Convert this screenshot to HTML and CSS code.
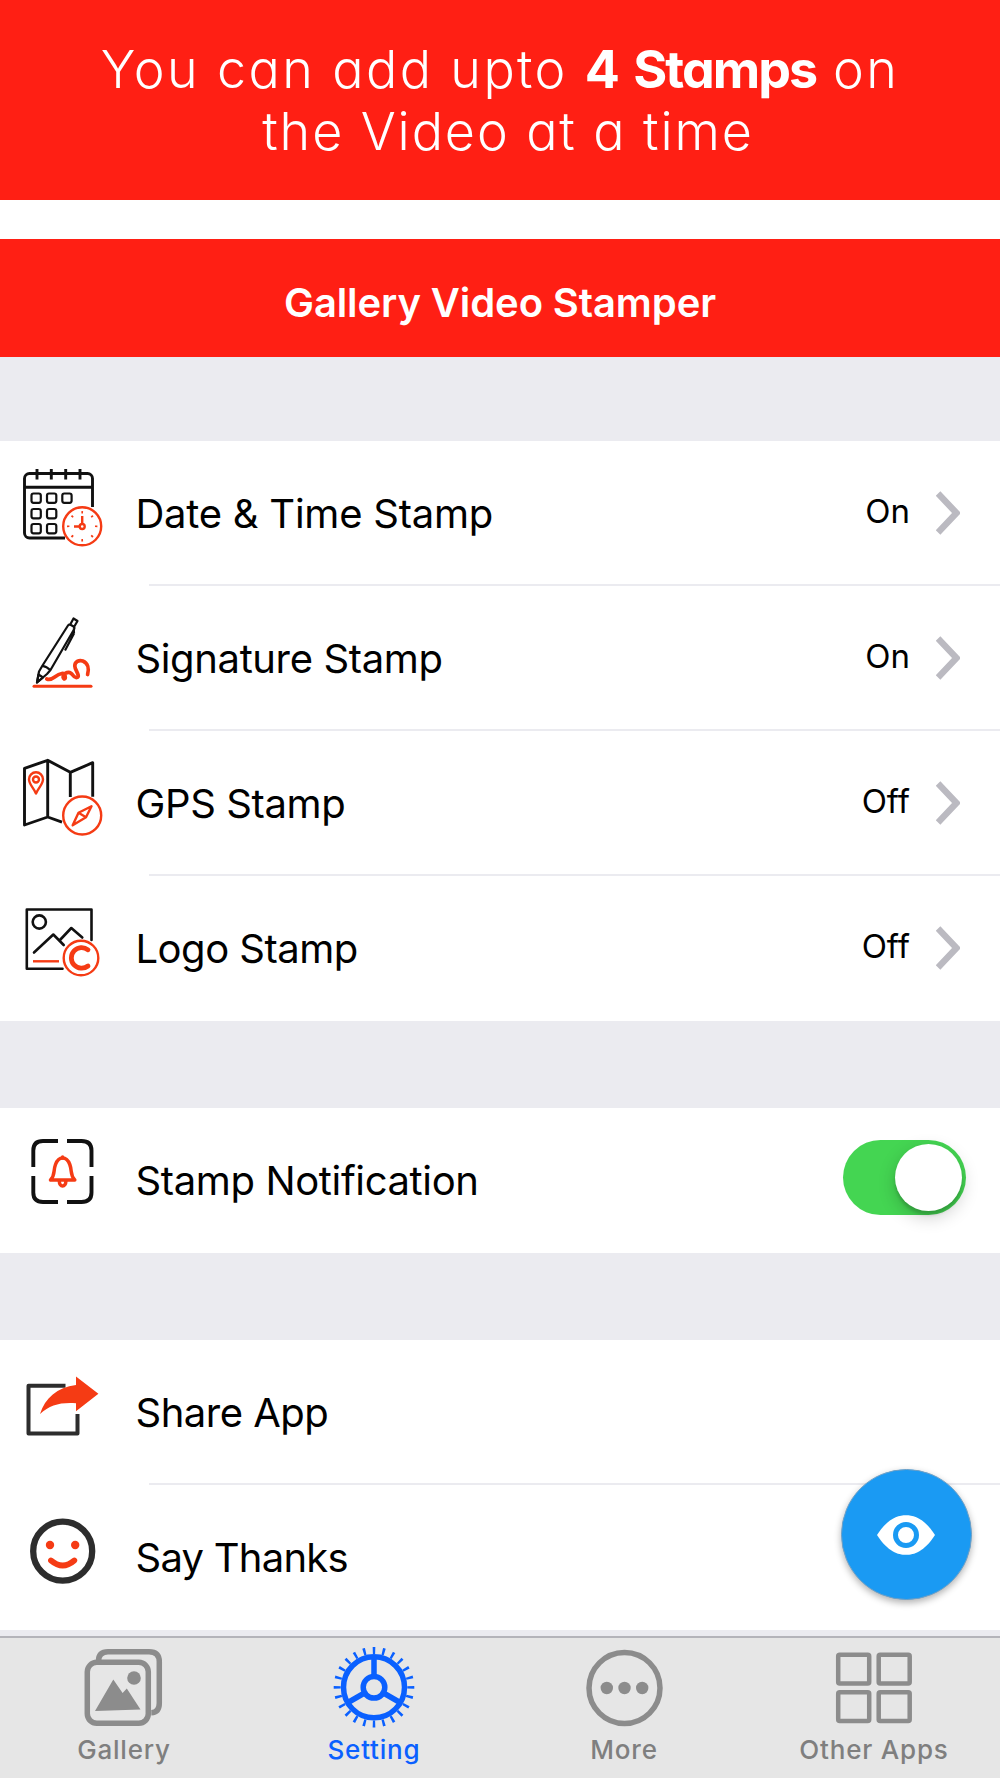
FILE: index.html
```
<!DOCTYPE html>
<html lang="en">
    <head>
        <meta charset="utf-8">
        <title>Gallery Video Stamper</title>
        <link rel="stylesheet" href="styles.css">
    </head>
    <body>
        <div class="promo">
            <div class="promo-line">You can add upto <b>4 Stamps</b> on</div>
            <div class="promo-line second">the Video at a time</div>
        </div>

        <h1 class="navbar">Gallery Video Stamper</h1>

        <main class="settings">
            <section class="group">
                <div class="row">
                    <svg class="icon" viewBox="0 0 110 145" aria-hidden="true">
                        <g class="ink">
                            <path d="M92.5 66V37.5a5 5 0 0 0-5-5h-58a5 5 0 0 0-5 5V92a5 5 0 0 0 5 5H65" />
                            <path d="M24.5 46.3h68M37 28v10.500M51.300 28v10.500M65.700 28v10.500M80 28v10.500" />
                        </g>
                        <g class="ink thin">
                            <rect x="31.500" y="52.500" width="9.300" height="9.300" rx="2" />
                            <rect x="47" y="52.500" width="9.300" height="9.300" rx="2" />
                            <rect x="62.300" y="52.500" width="9.300" height="9.300" rx="2" />
                            <rect x="31.500" y="68" width="9.300" height="9.300" rx="2" />
                            <rect x="47" y="68" width="9.300" height="9.300" rx="2" />
                            <rect x="31.500" y="83" width="9.300" height="9.300" rx="2" />
                            <rect x="47" y="83" width="9.300" height="9.300" rx="2" />
                        </g>
                        <g class="red">
                            <circle cx="82.200" cy="85.300" r="19" />
                            <circle cx="82.200" cy="85.500" r="2.500" />
                            <path d="M82.200 83V75M79.500 85.500H74" />
                            <circle cx="82.200" cy="85.300" r="14" pathLength="80" stroke-dasharray="1.600 8.400" stroke-dashoffset=".8" />
                        </g>
                    </svg>
                    <span class="label date">Date &amp; Time Stamp</span>
                    <span class="value">On</span>
                    <svg class="chevron" viewBox="0 0 24 46"><path d="M2 3.500l18.500 19.500L2 42.500" /></svg>
                </div>
                <div class="row">
                    <svg class="icon" viewBox="0 0 110 145" aria-hidden="true">
                        <g class="ink thin">
                            <path d="M37 96.500l2-11 3.500-6L68 39.500q1-1.500 3-.5l2.500 1.500q1.500 1 .500 3L50.500 84l-3.500 4zM42.500 79.800q4 .500 8 4.500M70.500 38l3-5.500 4 2.500-3.500 6M74 47.500L65 64.500M73.800 42.500l.200 5" />
                            <path d="M37 96.500l1.500-8 4.500 3z" />
                        </g>
                        <g class="red">
                            <path class="scribble" d="M46.800 93c6 2.500 8-4.500 15-5.500 4-.5 4 5 2.500 5.500-3-1.500 0-6.500 4.200-6.700 4.500-.3 4 6 8.300 5.200 4.200-1-2-7.500-2-11.500 0-4 4-6.500 8-5 5 2 6.500 7.500 4.800 13.500" />
                            <path class="base" d="M34 100.300h57" />
                        </g>
                    </svg>
                    <span class="label signature">Signature Stamp</span>
                    <span class="value">On</span>
                    <svg class="chevron" viewBox="0 0 24 46"><path d="M2 3.500l18.500 19.500L2 42.500" /></svg>
                </div>
                <div class="row">
                    <svg class="icon" viewBox="0 0 110 145" aria-hidden="true">
                        <path class="ink" d="M62 91.200L47.700 86l-23.200 8V37.300l23.200-8 22.600 12 22.400-9.600v34M47.700 29.300V86M70.300 41.300V66" />
                        <g class="red">
                            <path d="M36 62.500C33.500 56.500 29 53.500 29 48.300a7 7 0 0 1 14 0c0 5.200-4.500 8.200-7 14.200z" />
                            <circle cx="36" cy="48.500" r="3" />
                            <circle cx="82.200" cy="84.500" r="19" />
                            <path d="M91.500 75.300l-5.500 11-13.300 8 5.800-12.500zM78.500 81.800l7.500 4.500" />
                        </g>
                    </svg>
                    <span class="label gps">GPS Stamp</span>
                    <span class="value">Off</span>
                    <svg class="chevron" viewBox="0 0 24 46"><path d="M2 3.500l18.500 19.500L2 42.500" /></svg>
                </div>
                <div class="row">
                    <svg class="icon" viewBox="0 0 110 145" aria-hidden="true">
                        <g class="ink logo-frame">
                            <path d="M91.500 64V33.500H26.800v59.200H62.500" />
                            <circle cx="39.300" cy="46" r="6.600" />
                            <path d="M34 76.500l19.300-18L63.700 69M59.500 64.500L71.300 52l11 9.500" />
                        </g>
                        <g class="red">
                            <path d="M33 85.300h26" />
                            <circle cx="81" cy="82" r="17.300" />
                            <path class="copy" d="M88 73.800a10.300 10.300 0 1 0 0 16.200" />
                        </g>
                    </svg>
                    <span class="label logo">Logo Stamp</span>
                    <span class="value">Off</span>
                    <svg class="chevron" viewBox="0 0 24 46"><path d="M2 3.500l18.500 19.500L2 42.500" /></svg>
                </div>
            </section>

            <section class="group">
                <div class="row">
                    <svg class="icon" viewBox="0 0 110 145" aria-hidden="true">
                        <path class="ink frame" d="M58 33H43q-9.700 0-9.700 9.500V59M67 33h14.500q10 0 10 9.500V59M58 94H43q-9.700 0-9.700-9.500V68M67 94h14.500q10 0 10-9.500V68" />
                        <g class="red bell">
                            <path d="M50.500 72h24.300c-5-5-2.500-9-5-15.500-1.500-4-4-6.500-7.200-6.500s-5.600 2.500-7.100 6.500C53 63 55.500 67 50.500 72z" />
                            <path d="M62.600 50v-1M59.300 73c0 6.500 6.600 6.500 6.600 0" />
                        </g>
                    </svg>
                    <span class="label notification">Stamp Notification</span>
                    <span class="toggle"></span>
                </div>
            </section>

            <section class="group last">
                <div class="row">
                    <svg class="icon" viewBox="0 0 110 145" aria-hidden="true">
                        <path class="share-box" d="M65.500 45.700h-37v47.800h49V74" />
                        <path class="share-arrow" d="M76 36.500l22.400 17.200L76 71.300v-8c-16-1-26 1.700-36 10.700C45 58 57 47.500 76 45z" />
                    </svg>
                    <span class="label share">Share App</span>
                </div>
                <div class="row">
                    <svg class="icon" viewBox="0 0 110 145" aria-hidden="true">
                        <circle class="face" cx="62.700" cy="66.200" r="29.500" />
                        <circle class="eye" cx="50" cy="60" r="4.200" />
                        <circle class="eye" cx="75.200" cy="60" r="4.200" />
                        <path class="smile" d="M51 75.500q11.700 10 23.300 0" />
                    </svg>
                    <span class="label thanks">Say Thanks</span>
                </div>
            </section>
        </main>

        <nav class="tabbar">
            <div class="tab">
                <svg viewBox="0 0 250 90" aria-hidden="true">
                    <rect x="87.300" y="24.300" width="61" height="61" rx="9.500" />
                    <path d="M98.500 23q0-9.300 9.500-9.300h41q10.300 0 10.300 10V65q0 9.500-8 9.700" />
                    <g class="solid">
                        <circle cx="134" cy="40" r="6.800" />
                        <path d="M95 73l18.300-31.500 9.300 13.500 4.200-4.500L140.500 71.500z" />
                    </g>
                </svg>
                <span>Gallery</span>
            </div>
            <div class="tab active">
                <svg viewBox="0 0 250 90" aria-hidden="true">
                    <circle cx="124" cy="49.300" r="30.500" />
                    <circle cx="124" cy="49.300" r="10.800" />
                    <path d="M124 38V19M114.500 55L98 64.500M133.500 55l16.500 9.500" />
                    <circle class="teeth" cx="124" cy="49.300" r="36.800" pathLength="240" />
                </svg>
                <span>Setting</span>
            </div>
            <div class="tab">
                <svg viewBox="0 0 250 90" aria-hidden="true">
                    <circle cx="124.500" cy="50" r="35.500" />
                    <g class="solid">
                        <circle cx="106.800" cy="50" r="6.200" />
                        <circle cx="124.500" cy="50" r="6.200" />
                        <circle cx="142.200" cy="50" r="6.200" />
                    </g>
                </svg>
                <span>More</span>
            </div>
            <div class="tab">
                <svg class="grid" viewBox="0 0 250 90" aria-hidden="true">
                    <rect x="88.200" y="16.700" width="31" height="28.700" rx="1.500" />
                    <rect x="128.700" y="16.700" width="31" height="28.700" rx="1.500" />
                    <rect x="88.200" y="54.200" width="31" height="28.700" rx="1.500" />
                    <rect x="128.700" y="54.200" width="31" height="28.700" rx="1.500" />
                </svg>
                <span>Other Apps</span>
            </div>
        </nav>

        <button class="preview" aria-label="Preview">
            <svg viewBox="0 0 60 42" aria-hidden="true">
                <path d="M1 21C12 4 22 1.200 30 1.200S48 4 59 21C48 38 38 40.800 30 40.800S12 38 1 21z" />
                <circle cx="30" cy="21" r="10.500" />
            </svg>
        </button>
    </body>
</html>
```
FILE: styles.css
```
:root {
    --red: #ff1f14;
    --icon-red: #f53b14;
    --gray-bg: #ebebf0;
    --tab-gray: #8c8c8c;
    --active-blue: #0a60ff;
}

* {
    box-sizing: border-box;
}

body {
    margin: 0;
    width: 1000px;
    height: 1778px;
    display: flex;
    flex-direction: column;
    position: relative;
    overflow: hidden;
    background-color: #fff;
    color: #000;
    font-family: Inter, 'Liberation Sans', sans-serif;
}

.promo {
    height: 200px;
    padding-top: 39px;
    margin-bottom: 39px;
    background-color: var(--red);
    color: #fff;
    font-weight: 350;
    font-size: 52px;
    line-height: 62px;
    text-align: center;
    white-space: nowrap;
    letter-spacing: 2.4px;
    /* single-storey a */
    font-feature-settings: 'cv11';
}

.promo-line.second {
    padding-left: 16px;
    letter-spacing: 1.9px;
}

.promo b {
    font-weight: 750;
    letter-spacing: -2px;
    word-spacing: 5px;
}

.navbar {
    height: 118px;
    margin: 0;
    padding-top: 5px;
    background-color: var(--red);
    color: #fff;
    font-size: 40px;
    font-weight: 600;
    line-height: 118px;
    text-align: center;
    letter-spacing: -0.1px;
}

.settings {
    flex: 1;
    padding-top: 84px;
    background-color: var(--gray-bg);
}

.group {
    margin-bottom: 87px;
    background-color: #fff;
}

.group.last {
    margin-bottom: 0;
}

.row {
    height: 145px;
    display: flex;
    align-items: center;
    padding-right: 34px;
    /* divider starts after the icon column */
    background: linear-gradient(var(--gray-bg), var(--gray-bg)) 149px 100% / 100% 2px no-repeat;
}

.row:last-child {
    background: none;
}

.icon {
    width: 110px;
    height: 145px;
    flex: none;
    fill: none;
}

.ink {
    stroke: #111;
    stroke-width: 2.9;
    stroke-linejoin: round;
}

.thin {
    stroke-width: 2.2;
}

.logo-frame {
    stroke-width: 2.6;
    stroke-linecap: round;
}

.frame {
    stroke-width: 3.9;
}

.red {
    stroke: var(--icon-red);
    stroke-width: 2.4;
    stroke-linejoin: round;
}

.scribble {
    stroke-width: 3.7;
    stroke-linecap: round;
}

.base {
    stroke-width: 3;
    stroke-linecap: round;
}

.copy {
    stroke-width: 4.8;
    stroke-linecap: round;
}

.bell {
    stroke-width: 3.5;
    stroke-linecap: round;
}

.share-box {
    stroke: #2d2d2d;
    stroke-width: 4;
    stroke-linejoin: round;
}

.share-arrow {
    fill: var(--icon-red);
}

.face {
    stroke: #2d2d2d;
    stroke-width: 6.3;
}

.eye {
    fill: var(--icon-red);
}

.smile {
    stroke: var(--icon-red);
    stroke-width: 5.8;
    stroke-linecap: round;
}

.label {
    flex: 1;
    padding-left: 25.5px;
    font-size: 40px;
    white-space: nowrap;
    letter-spacing: -0.37px;
}

.label.date {
    letter-spacing: -0.25px;
}

.label.logo,
.label.share {
    letter-spacing: -0.5px;
}

.label.thanks {
    letter-spacing: -0.75px;
}

.value {
    padding-bottom: 5px;
    margin-right: 26px;
    font-size: 33px;
}

.chevron {
    width: 24px;
    height: 46px;
    margin-right: 6px;
    margin-bottom: 1px;
    fill: none;
    stroke: #bbbac1;
    stroke-width: 6.5;
}

.toggle {
    width: 123px;
    height: 75px;
    padding: 4px;
    margin-bottom: 6px;
    border-radius: 38px;
    background-color: #44d552;
}

.toggle::before {
    content: '';
    display: block;
    width: 67px;
    height: 67px;
    margin-left: auto;
    border-radius: 50%;
    background-color: #fff;
    box-shadow: 0 6px 18px rgba(0, 0, 0, 0.2), 0 4px 3px rgba(0, 0, 0, 0.14);
}

.tabbar {
    height: 142px;
    display: flex;
    border-top: 2px solid #b4b4ba;
    background-color: #e6e6e6;
}

.tab {
    width: 250px;
    display: flex;
    flex-direction: column;
    color: #7f7f7f;
    font-size: 26px;
    font-weight: 500;
    letter-spacing: 0.8px;
    line-height: 44px;
    text-align: center;
}

.tab span {
    padding-right: 2px;
}

.tab svg {
    width: 250px;
    height: 90px;
    fill: none;
    stroke: var(--tab-gray);
    stroke-width: 5.5;
}

.tab .solid {
    fill: var(--tab-gray);
    stroke: none;
}

.tab .grid {
    stroke-width: 4.5;
}

.tab.active {
    color: var(--active-blue);
}

.tab.active svg {
    stroke: var(--active-blue);
}

.tab .teeth {
    stroke-width: 7;
    stroke-dasharray: 2.6 7.4;
    stroke-dashoffset: 1.3;
}

/* floating action button over the list */
.preview {
    position: absolute;
    right: 28.5px;
    bottom: 178px;
    width: 131px;
    height: 131px;
    display: flex;
    align-items: center;
    justify-content: center;
    padding: 0;
    border: 1px solid #6b9fc7;
    border-radius: 50%;
    background-color: #1a9af3;
    box-shadow: 0 3px 7px rgba(0, 0, 0, 0.3);
}

.preview svg {
    width: 60px;
    height: 42px;
    fill: #fff;
}

.preview circle {
    stroke: #1a9af3;
    stroke-width: 5;
}
```
